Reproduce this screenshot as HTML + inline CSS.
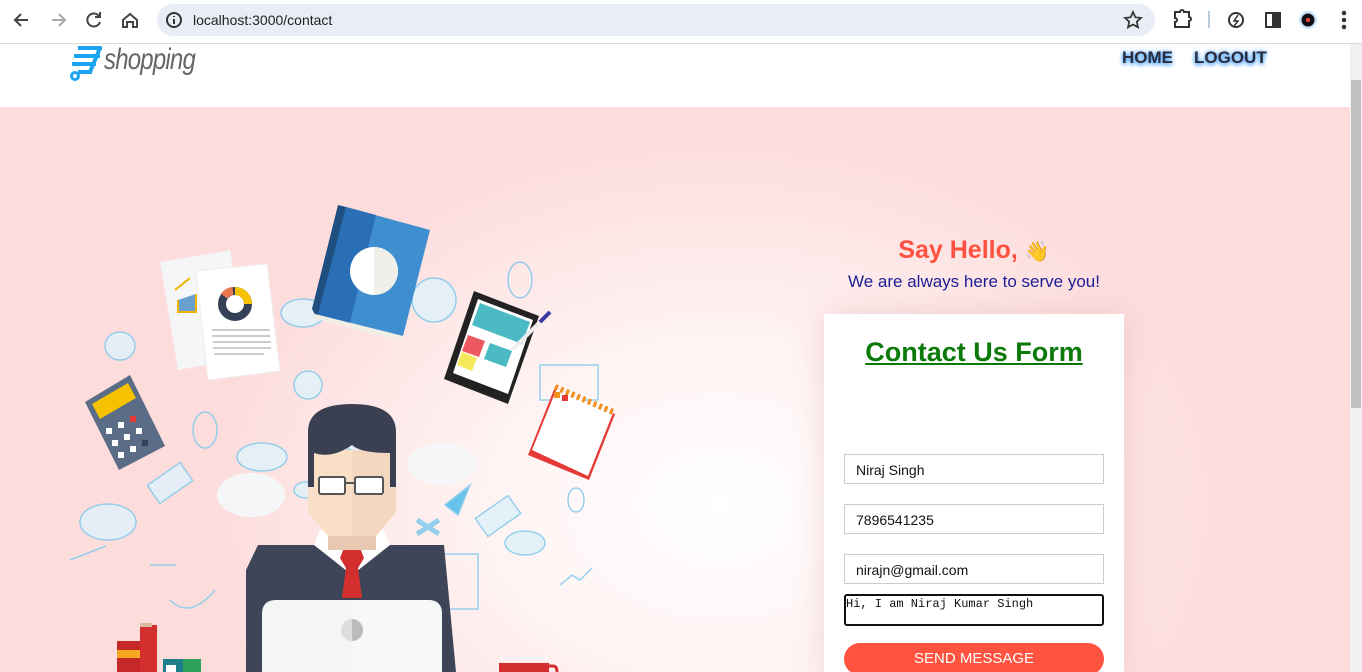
<!DOCTYPE html>
<html><head><meta charset="utf-8"><style>
*{margin:0;padding:0;box-sizing:border-box}
html,body{width:1362px;height:672px;overflow:hidden}
body{position:relative;font-family:"Liberation Sans",sans-serif;background:#fff}
.chrome{position:absolute;left:0;top:0;width:1362px;height:44px;background:#fff;border-bottom:1px solid #dcdcdc}
.url{position:absolute;left:157px;top:4px;width:998px;height:32px;border-radius:16px;background:#e9edf6}
.url span{position:absolute;left:36px;top:8px;font-size:14px;color:#222}
.hdr{position:absolute;left:0;top:44px;width:1350px;height:63px;background:#fff;overflow:hidden}
.main{position:absolute;left:0;top:107px;width:1350px;height:565px;background:radial-gradient(ellipse 520px 380px at 720px 400px,#fff 0%,#fff3f3 45%,#fddcdc 100%)}
.nav{position:absolute;top:49px;font-weight:bold;font-size:17px;color:#2b2b3a;text-shadow:0 0 4px #4aa3ff,0 2px 4px #4aa3ff}
.sb{position:absolute;left:1350px;top:44px;width:12px;height:628px;background:#f1f1f1}
.sb div{position:absolute;left:1px;top:36px;width:10px;height:328px;background:#c1c1c1}
.card{position:absolute;left:824px;top:314px;width:300px;height:358px;background:#fff;box-shadow:0 0 30px rgba(200,120,120,.25)}
.in{position:absolute;left:844px;width:260px;height:30px;border:1px solid #ccc;background:#fff;font-size:14px;padding:7px 11px;color:#111}
</style></head><body>
<div class="chrome">
<svg width="150" height="44" style="position:absolute;left:0;top:0" fill="none" stroke="#444" stroke-width="2">
<path d="M28 20H16M21 14l-6 6 6 6"/><path d="M52 20h12M59 14l6 6-6 6" stroke="#aaa"/>
<path d="M99 16a6.5 6.5 0 1 0 1 6M100 12v5h-5"/><path d="M123 20l7-6 7 6v7h-4v-5h-6v5h-4z"/></svg>
<div class="url"><svg width="20" height="20" style="position:absolute;left:7px;top:6px"><circle cx="10" cy="10" r="7" fill="none" stroke="#333" stroke-width="2"/><path d="M10 9v5M10 6v1" stroke="#333" stroke-width="2"/></svg><span>localhost:3000/contact</span>
<svg width="20" height="20" style="position:absolute;left:966px;top:6px"><path d="M10 2l2.4 5.3 5.6.6-4.2 3.8 1.2 5.6L10 14.5 5 17.3l1.2-5.6L2 7.9l5.6-.6z" fill="none" stroke="#333" stroke-width="1.7"/></svg></div>
<svg width="200" height="44" style="position:absolute;left:1162px;top:0" fill="none" stroke="#333" stroke-width="2">
<path d="M13 12h5a2 2 0 0 1 4 0h5v5a2 2 0 0 1 0 4v6H13v-5a2 2 0 0 0 0-4z"/><path d="M47 11v17" stroke="#bcd"/>
<circle cx="74" cy="20" r="7"/><path d="M76 15l-4 6h4l-4 5" stroke-width="1.5"/>
<rect x="104" y="13" width="14" height="14"/><rect x="111" y="13" width="7" height="14" fill="#333"/>
<circle cx="146" cy="20" r="9" fill="#cfe3ff" stroke="none"/><circle cx="146" cy="20" r="6.5" fill="#111" stroke="none"/><circle cx="146" cy="20" r="2" fill="#f44" stroke="none"/>
<circle cx="182" cy="13" r="1.3" fill="#333"/><circle cx="182" cy="20" r="1.3" fill="#333"/><circle cx="182" cy="27" r="1.3" fill="#333"/></svg>
</div>
<div class="hdr">
<svg width="40" height="40" style="position:absolute;left:68px;top:0"><path d="M10 4h24M6 12h26M4 20h24M10 28h14" stroke="#1ba5f0" stroke-width="4" fill="none"/><path d="M32 4L22 28" stroke="#1ba5f0" stroke-width="4"/><circle cx="7" cy="32" r="3.5" fill="none" stroke="#1ba5f0" stroke-width="3"/></svg>
<div style="position:absolute;left:104px;top:-1px;font-size:30px;font-style:italic;color:#666;letter-spacing:-1px;transform:scaleX(.8);transform-origin:0 0">shopping</div>
<div class="nav" style="left:1122px;top:4px">HOME</div><div class="nav" style="left:1194px;top:4px">LOGOUT</div>
</div>
<div class="main"></div>
<svg width="1350" height="672" style="position:absolute;left:0;top:0">
<g fill="#e3f1f9" stroke="#8accec" stroke-width="1.5" opacity=".9">
<ellipse cx="303" cy="313" rx="22" ry="14"/><ellipse cx="434" cy="300" rx="22" ry="22"/><ellipse cx="120" cy="346" rx="15" ry="14"/><ellipse cx="308" cy="385" rx="14" ry="14"/>
<ellipse cx="262" cy="457" rx="25" ry="14"/><ellipse cx="108" cy="522" rx="28" ry="18"/><ellipse cx="364" cy="442" rx="22" ry="10"/>
<rect x="150" y="472" width="40" height="22" transform="rotate(-35 170 483)"/><rect x="478" y="505" width="40" height="22" transform="rotate(-35 498 516)"/>
<ellipse cx="525" cy="543" rx="20" ry="12"/><ellipse cx="306" cy="490" rx="12" ry="8"/><ellipse cx="205" cy="430" rx="12" ry="18" fill="none"/>
<rect x="540" y="365" width="58" height="35" fill="none"/><rect x="442" y="554" width="36" height="55" fill="none"/>
<path d="M445 505l25-20-12 30z" fill="#55bde8"/><path d="M417 520l22 14M439 520l-22 14" stroke-width="5"/>
<path d="M70 560l36-14M150 565l26 0M170 600q20 20 45-10M560 585l12-10 8 5 12-12" fill="none"/>
<ellipse cx="520" cy="280" rx="12" ry="18" fill="none"/><ellipse cx="576" cy="500" rx="8" ry="12" fill="none"/>
</g>
<path d="M160 262l70-12 18 108-70 12z" fill="#f5f6f8"/>
<path d="M175 290l15-12M178 300v12h18v-18" stroke="#f0b400" stroke-width="2" fill="#6aa0d0"/>
<path d="M196 271l71-7 13 107-72 9z" fill="#fff" stroke="#eee"/>
<circle cx="235" cy="304" r="13" fill="none" stroke="#344055" stroke-width="8"/><path d="M235 291a13 13 0 0 1 13 13" stroke="#f6c200" stroke-width="8" fill="none"/><path d="M224 296a13 13 0 0 1 9-5" stroke="#e97850" stroke-width="8" fill="none"/>
<path d="M212 330h58M212 336h58M213 342h58M213 348h58M214 354h50" stroke="#ccc" stroke-width="2"/>
<path d="M346 207l84 23-27 106-88-22z" fill="#3f8fd0"/><path d="M346 207l30 8-26 108-35-9z" fill="#2a6fb5"/><path d="M346 207l-8-2-26 104 5 9z" fill="#1f4f7f"/>
<path d="M315 314l88 22 0 5-88-22z" fill="#f0eee6"/><circle cx="374" cy="271" r="24" fill="#fff"/><path d="M374 247a24 24 0 0 1 0 48z" fill="#f1efe9"/>
<path d="M85 402l45-27 35 71-46 24z" fill="#5b6d86"/><path d="M92 404l36-21 8 15-36 21z" fill="#f6c200"/>
<g fill="#fff"><rect x="106" y="428" width="6" height="6"/><rect x="118" y="422" width="6" height="6"/><rect x="130" y="416" width="6" height="6" fill="#e53935"/><rect x="112" y="440" width="6" height="6"/><rect x="124" y="434" width="6" height="6"/><rect x="136" y="428" width="6" height="6"/><rect x="118" y="452" width="6" height="6"/><rect x="130" y="446" width="6" height="6"/><rect x="142" y="440" width="6" height="6" fill="#344055"/></g>
<path d="M474 291l65 25-31 88-64-25z" fill="#222"/><path d="M478 299l55 21-25 74-55-21z" fill="#fff"/><path d="M480 303l50 19-8 22-50-19z" fill="#4bbac4"/><path d="M468 335l17 6-6 16-17-6z" fill="#ec5a60"/><path d="M462 352l15 6-5 13-15-6z" fill="#f5e85a"/><path d="M490 343l22 8-6 16-22-8z" fill="#4bbac4"/>
<path d="M512 350l38-38" stroke="#eee" stroke-width="4"/><path d="M540 322l10-10" stroke="#3a3aa0" stroke-width="4"/>
<path d="M528 455l27-68 60 27-26 66z" fill="#e53935"/><path d="M532 450l25-62 56 25-25 63z" fill="#fff"/><path d="M555 387l58 25" stroke="#f0901e" stroke-width="6" stroke-dasharray="3 3"/><rect x="554" y="392" width="6" height="6" fill="#f0901e"/><rect x="562" y="395" width="6" height="6" fill="#e53935"/>
<ellipse cx="251" cy="495" rx="34" ry="22" fill="#f4f6f8"/><ellipse cx="442" cy="464" rx="34" ry="21" fill="#f4f6f8"/>
<path d="M258 545h186l12 127H246z" fill="#3f4558"/><path d="M258 545l-12 25v102h10z" fill="#3f4558"/>
<path d="M320 530h64l6 15-38 30-38-30z" fill="#fff"/><path d="M344 548h16l4 10-6 10 4 30h-20l4-30-6-10z" fill="#d32f2f"/>
<rect x="328" y="520" width="48" height="30" fill="#e8c8b0"/>
<path d="M308 450h88v62l-20 24h-48l-20-24z" fill="#f8dfc5"/><path d="M352 450h44v62l-20 24h-24z" fill="#f3d7be"/>
<path d="M308 432q0-28 44-28t44 28v55h-6v-34q-30 0-38-8-20 14-38 8v34h-6z" fill="#3a3f51"/>
<rect x="319" y="477" width="26" height="17" rx="2" fill="#fff" stroke="#555" stroke-width="2"/><rect x="355" y="477" width="28" height="17" rx="2" fill="#fff" stroke="#555" stroke-width="2"/><path d="M345 483h10" stroke="#555" stroke-width="2"/>
<path d="M262 672v-58q0-14 14-14h152q14 0 14 14v58z" fill="#f4f5f7"/><path d="M352 600h76q14 0 14 14v58h-90z" fill="#f7f8fa"/><circle cx="352" cy="630" r="11" fill="#ddd"/><path d="M352 619a11 11 0 0 1 0 22z" fill="#bbb"/>
<rect x="117" y="641" width="25" height="31" fill="#c62828"/><rect x="117" y="650" width="25" height="8" fill="#f6a821"/><rect x="140" y="625" width="17" height="47" fill="#d32f2f"/><rect x="140" y="623" width="12" height="4" fill="#d9b9a0"/>
<rect x="163" y="659" width="20" height="13" fill="#1e7f8a"/><rect x="166" y="665" width="10" height="7" fill="#fff"/><rect x="183" y="659" width="18" height="13" fill="#2ea25a"/>
<rect x="499" y="663" width="50" height="9" fill="#d32f2f"/><path d="M549 666h4q4 0 4 6" stroke="#d32f2f" stroke-width="3" fill="none"/>
</svg>
<div class="card"></div>
<div style="position:absolute;left:824px;top:236px;width:300px;text-align:center;font-size:25px;font-weight:bold;color:#ff5140">Say Hello, <span style="font-size:20px">👋</span></div>
<div style="position:absolute;left:820px;top:272px;width:308px;text-align:center;font-size:17px;color:#1c1c94">We are always here to serve you!</div>
<div style="position:absolute;left:824px;top:337px;width:300px;text-align:center;font-size:27px;font-weight:bold;color:#0b7a0b;text-decoration:underline">Contact Us Form</div>
<div class="in" style="top:454px">Niraj Singh</div>
<div class="in" style="top:504px">7896541235</div>
<div class="in" style="top:554px">nirajn@gmail.com</div>
<div class="in" style="top:594px;height:32px;border:2px solid #111;border-radius:3px;font-family:'Liberation Mono',monospace;font-size:12px;padding:1px 0">Hi, I am Niraj Kumar Singh</div>
<div style="position:absolute;left:844px;top:643px;width:260px;height:32px;border-radius:16px;background:#ff5340;color:#fff;text-align:center;font-size:15px;line-height:31px">SEND MESSAGE</div>
<div class="sb"><div></div></div>
</body></html>
